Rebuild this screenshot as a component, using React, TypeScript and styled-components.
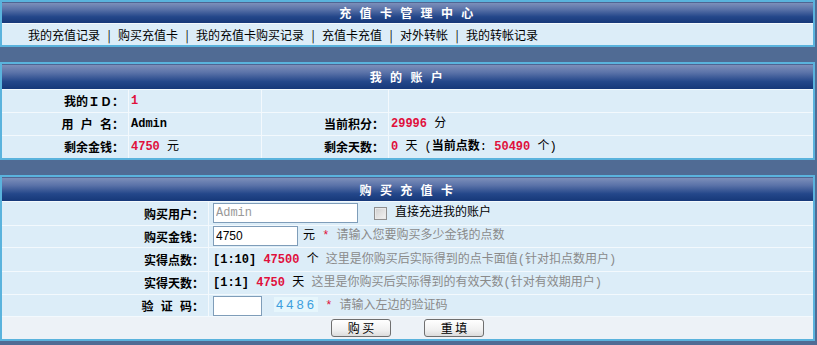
import React from "react";
import styled, { createGlobalStyle } from "styled-components";

const GlobalStyle = createGlobalStyle`
  html, body {
    margin: 0;
    padding: 0;
    background: #506b94;
  }
  body {
    font-family: "Noto Sans CJK SC", "Liberation Sans", sans-serif;
    font-size: 12px;
    color: #000;
  }
`;

const Page = styled.div`
  display: flex;
  flex-direction: column;
  gap: 15px;
  width: 817px;
  height: 345px;
  overflow: hidden;
`;

const Panel = styled.div<{ $cols?: string; $rows: string }>`
  width: 815px;
  box-sizing: border-box;
  border: 2px solid #5ab3dd;
  background: #f3f9fd;
  display: grid;
  grid-template-columns: ${(p) => p.$cols || "1fr"};
  grid-template-rows: ${(p) => p.$rows};
  gap: 1px;
`;

const Head = styled.div`
  grid-column: 1 / -1;
  display: flex;
  align-items: center;
  justify-content: center;
  background: linear-gradient(#24396a 0px, #7d8fba 1px, #5a72a8 35%, #24478a 70%, #163879 100%);
  color: #fff;
  font-family: "Liberation Sans", "Noto Sans CJK SC", sans-serif;
  font-weight: bold;
  font-size: 12px;
  letter-spacing: 2.5px;
  white-space: pre;
`;

const NavRow = styled.div`
  grid-column: 1 / -1;
  display: flex;
  align-items: center;
  padding-left: 26px;
  background: #dcedf8;
`;

const NavLink = styled.a`
  color: #000;
  text-decoration: none;
  cursor: pointer;
`;

const Sep = styled.span`
  display: inline-block;
  width: 18px;
  text-align: center;
`;

const Label = styled.div`
  display: flex;
  align-items: center;
  justify-content: flex-end;
  padding-right: 4px;
  background: #dcedf8;
  font-family: "Liberation Mono", "Noto Sans CJK SC", monospace;
  font-weight: bold;
  white-space: pre;
`;

const Value = styled.div<{ $pad?: number }>`
  display: flex;
  align-items: center;
  padding-left: ${(p) => p.$pad ?? 2}px;
  background: #dcedf8;
`;

const Line = styled.span`
  font-family: "Liberation Mono", "Noto Sans CJK SC", monospace;
  white-space: pre;
  line-height: 20px;
`;

const Num = styled.b<{ $red?: boolean }>`
  color: ${(p) => (p.$red ? "#e0103c" : "#000")};
`;

const Hint = styled.span`
  color: #8a8a8a;
`;

const Star = styled.span`
  color: #e0103c;
`;

const TextBox = styled.input<{ $w: number; $dim?: boolean }>`
  width: ${(p) => p.$w}px;
  height: 20px;
  box-sizing: border-box;
  margin: 0 5px 0 0;
  padding: 0 2px;
  vertical-align: middle;
  border: 1px solid #7f9db9;
  background: #fff;
  color: ${(p) => (p.$dim ? "#999" : "#000")};
  font-family: ${(p) => (p.$dim ? '"Liberation Mono", monospace' : '"Liberation Sans", sans-serif')};
  font-size: 12px;
  outline: none;
`;

const Check = styled.span`
  display: inline-block;
  width: 13px;
  height: 13px;
  box-sizing: border-box;
  margin: 0 8px 0 11px;
  vertical-align: middle;
  border: 1px solid #8f8f8f;
  background: linear-gradient(135deg, #cfcfcf, #f4f4f4);
  box-shadow: inset 0 0 0 1px #e9e9e9;
`;

const Code = styled.span`
  margin: 0 0 0 7px;
  padding: 0 1px 0 2px;
  background: #e6f6fc;
  color: #3d9fde;
  font-family: "Liberation Sans", sans-serif;
  font-size: 13px;
  letter-spacing: 3px;
`;

const ButtonRow = styled.div`
  grid-column: 1 / -1;
  display: flex;
  align-items: center;
  justify-content: center;
  gap: 33px;
  background: #edf2f7;
`;

const Button = styled.button`
  width: 60px;
  height: 18px;
  padding: 0;
  border: 1px solid #6f6f6f;
  border-radius: 3px;
  background: linear-gradient(#ffffff, #f1f1f1 60%, #dcdcdc);
  font-family: "Noto Sans CJK SC", sans-serif;
  font-size: 12px;
  line-height: 16px;
  color: #000;
  white-space: pre;
  cursor: pointer;
`;

const Cell = ({ pad, children }: { pad?: number; children?: React.ReactNode }) => (
  <Value $pad={pad}>
    <Line>{children}</Line>
  </Value>
);

const navItems = ["我的充值记录", "购买充值卡", "我的充值卡购买记录", "充值卡充值", "对外转帐", "我的转帐记录"];

export default function App() {
  return (
    <>
      <GlobalStyle />
      <Page>
        <Panel $rows="21px 21px">
          <Head>充 值 卡 管 理 中 心</Head>
          <NavRow>
            {navItems.map((n, i) => (
              <React.Fragment key={n}>
                {i > 0 && <Sep>|</Sep>}
                <NavLink>{n}</NavLink>
              </React.Fragment>
            ))}
          </NavRow>
        </Panel>

        <Panel $cols="126px 132px 126px 1fr" $rows="25px 22px 22px 22px">
          <Head>我 的 账 户</Head>
          <Label>我的ＩＤ：</Label>
          <Cell><Num $red>1</Num></Cell>
          <Label />
          <Cell />
          <Label>用 户 名：</Label>
          <Cell><Num>Admin</Num></Cell>
          <Label>当前积分：</Label>
          <Cell><Num $red>29996</Num> 分</Cell>
          <Label>剩余金钱：</Label>
          <Cell><Num $red>4750</Num> 元</Cell>
          <Label>剩余天数：</Label>
          <Cell>
            <Num $red>0</Num> 天 (<b>当前点数</b>: <Num $red>50490</Num> 个)
          </Cell>
        </Panel>

        <Panel $cols="206px 1fr" $rows="24px 23px 21px 23px 22px 21px 22px">
          <Head>购 买 充 值 卡</Head>
          <Label>购买用户：</Label>
          <Cell pad={4}>
            <TextBox $w={145} $dim readOnly value="Admin" />
            <Check />
            直接充进我的账户
          </Cell>
          <Label>购买金钱：</Label>
          <Cell pad={4}>
            <TextBox $w={85} readOnly value="4750" />
            元 <Star>*</Star> <Hint>请输入您要购买多少金钱的点数</Hint>
          </Cell>
          <Label>实得点数：</Label>
          <Cell pad={4}>
            <Num>[1:10]</Num> <Num $red>47500</Num> 个 <Hint>这里是你购买后实际得到的点卡面值(针对扣点数用户)</Hint>
          </Cell>
          <Label>实得天数：</Label>
          <Cell pad={4}>
            <Num>[1:1]</Num> <Num $red>4750</Num> 天 <Hint>这里是你购买后实际得到的有效天数(针对有效期用户)</Hint>
          </Cell>
          <Label>验 证 码：</Label>
          <Cell pad={4}>
            <TextBox $w={49} readOnly value="" />
            <Code>4486</Code> <Star>*</Star> <Hint>请输入左边的验证码</Hint>
          </Cell>
          <ButtonRow>
            <Button>购 买</Button>
            <Button>重 填</Button>
          </ButtonRow>
        </Panel>
      </Page>
    </>
  );
}
